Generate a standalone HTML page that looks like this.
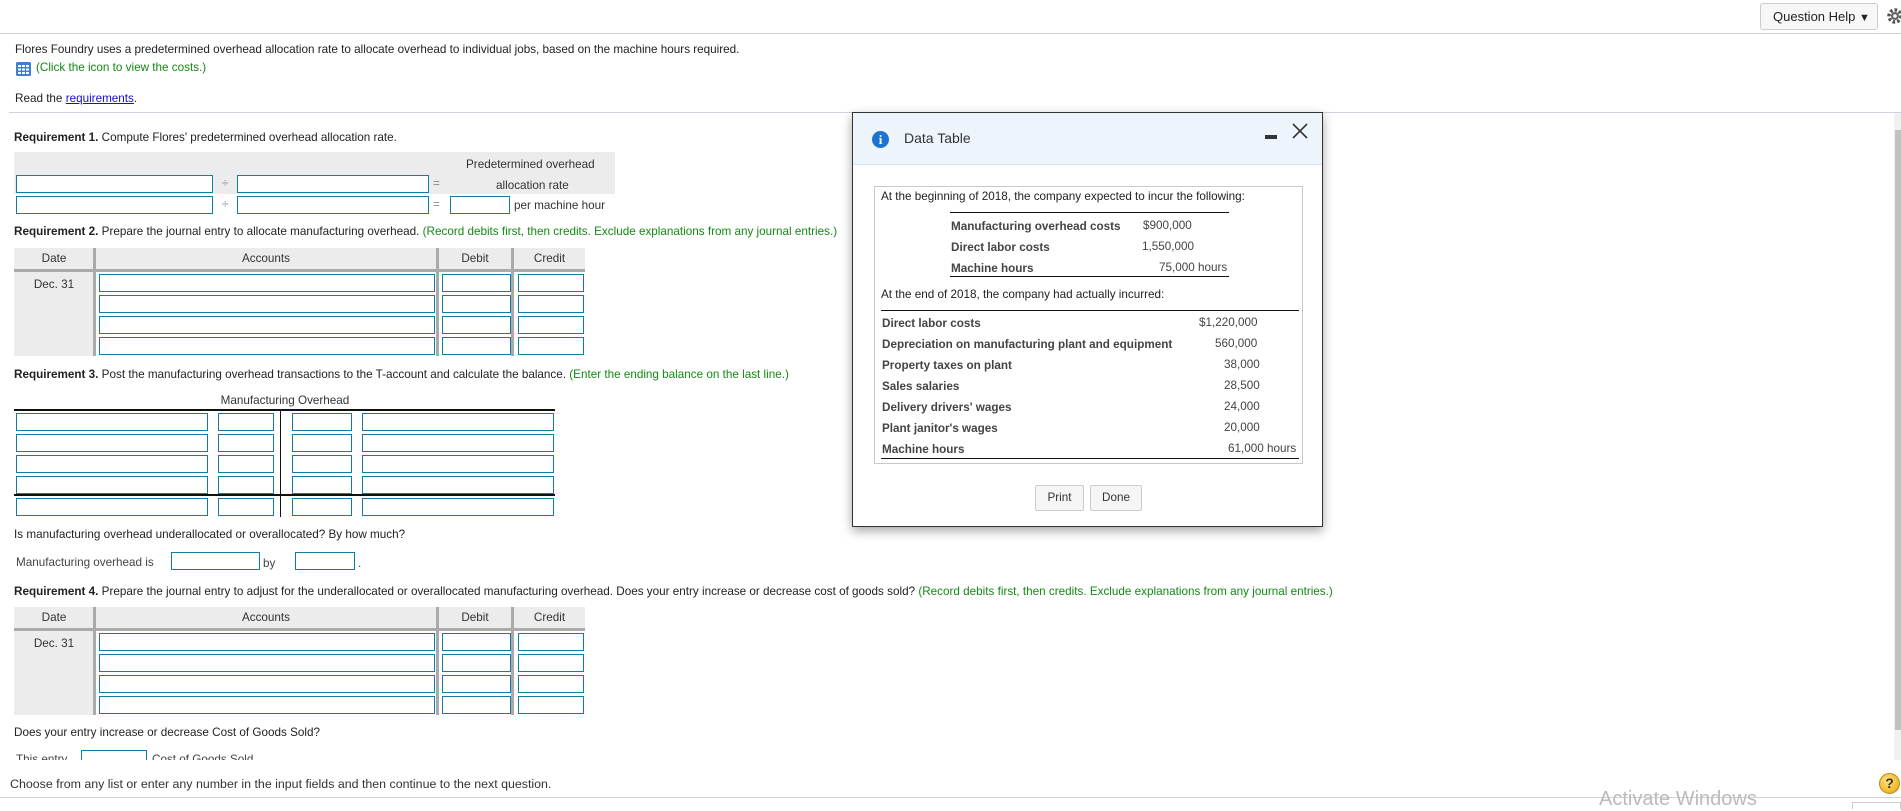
<!DOCTYPE html>
<html><head><meta charset="utf-8">
<style>
*{margin:0;padding:0;box-sizing:border-box}
body{width:1901px;height:809px;overflow:hidden;background:#fff;font-family:"Liberation Sans",Arial,sans-serif;font-size:11.7px;color:#222;position:relative}
.a{position:absolute;white-space:nowrap}
.t{position:absolute;white-space:nowrap;line-height:14px}
.in{position:absolute;border:1px solid #127da0;background:#fff;height:18px}
.g{color:#138a13}
.gray{position:absolute;background:#ececec}
.hl{position:absolute;background:#999}
.dt{position:absolute;white-space:nowrap;line-height:14px;color:#333;font-size:11.7px}
</style></head><body>
<div class="a" style="left:1760px;top:3px;width:118px;height:27px;border:1px solid #ccc;border-radius:3px;background:#f7f7f7;font-size:13px;line-height:25px;padding-left:12px;color:#222">Question Help <span style="font-size:11px">&#9660;</span></div>
<svg class="a" style="left:1886px;top:7px" width="18" height="18" viewBox="0 0 18 18"><circle cx="9" cy="9" r="6" fill="none" stroke="#555" stroke-width="3.5" stroke-dasharray="2.6 2"/><circle cx="9" cy="9" r="4" fill="#666"/><circle cx="9" cy="9" r="1.8" fill="#fff"/></svg>
<div class="a" style="left:0;top:33px;width:1901px;height:1px;background:#cfd3dd"></div>

<div class="t" style="left:15px;top:43px">Flores Foundry uses a predetermined overhead allocation rate to allocate overhead to individual jobs, based on the machine hours required.</div>
<svg class="a" style="left:16px;top:62px" width="15" height="14" viewBox="0 0 15 14"><rect width="15" height="14" rx="1.5" fill="#3d7fd1"/><g fill="#fff"><rect x="2" y="3" width="3" height="2"/><rect x="6" y="3" width="3" height="2"/><rect x="10" y="3" width="3" height="2"/><rect x="2" y="6.5" width="3" height="2"/><rect x="6" y="6.5" width="3" height="2"/><rect x="10" y="6.5" width="3" height="2"/><rect x="2" y="10" width="3" height="2"/><rect x="6" y="10" width="3" height="2"/><rect x="10" y="10" width="3" height="2"/></g></svg>
<div class="t g" style="left:36px;top:61px">(Click the icon to view the costs.)</div>
<div class="t" style="left:15px;top:92px">Read the <span style="color:#1a0dcc;text-decoration:underline">requirements</span>.</div>
<div class="a" style="left:9px;top:112px;width:1892px;height:1px;background:#cfd3dd"></div>

<div class="t" style="left:14px;top:131px"><b>Requirement 1.</b> Compute Flores' predetermined overhead allocation rate.</div>
<div class="gray" style="left:14px;top:152px;width:601px;height:42px"></div>
<div class="t" style="left:466px;top:158px;color:#333">Predetermined overhead</div>
<div class="t" style="left:496px;top:179px;color:#333">allocation rate</div>
<div class="in" style="left:16px;top:175px;width:197px"></div>
<div class="t" style="left:222px;top:177px;color:#888">÷</div>
<div class="in" style="left:237px;top:175px;width:192px"></div>
<div class="t" style="left:433px;top:177px;color:#888">=</div>
<div class="in" style="left:16px;top:196px;width:197px"></div>
<div class="t" style="left:222px;top:198px;color:#888">÷</div>
<div class="in" style="left:237px;top:196px;width:192px"></div>
<div class="t" style="left:433px;top:198px;color:#888">=</div>
<div class="in" style="left:450px;top:196px;width:60px"></div>
<div class="t" style="left:514px;top:199px;color:#333">per machine hour</div>

<div class="t" style="left:14px;top:225px"><b>Requirement 2.</b> Prepare the journal entry to allocate manufacturing overhead. <span class="g">(Record debits first, then credits. Exclude explanations from any journal entries.)</span></div>

<div class="gray" style="left:14px;top:248px;width:571px;height:22px"></div>
<div class="gray" style="left:14px;top:272px;width:80px;height:84px"></div>
<div class="hl" style="left:14px;top:269px;width:571px;height:3px;background:#aaa"></div>
<div class="hl" style="left:93px;top:248px;width:3px;height:108px;background:#aaa"></div>
<div class="hl" style="left:436px;top:248px;width:3px;height:108px;background:#aaa"></div>
<div class="hl" style="left:511px;top:248px;width:3px;height:108px;background:#aaa"></div>
<div class="t" style="left:14px;top:252px;width:80px;text-align:center;color:#333">Date</div>
<div class="t" style="left:96px;top:252px;width:340px;text-align:center;color:#333">Accounts</div>
<div class="t" style="left:439px;top:252px;width:72px;text-align:center;color:#333">Debit</div>
<div class="t" style="left:514px;top:252px;width:71px;text-align:center;color:#333">Credit</div>
<div class="t" style="left:14px;top:278px;width:80px;text-align:center;color:#333">Dec. 31</div>
<div class="in" style="left:99px;top:274px;width:336px"></div><div class="in" style="left:442px;top:274px;width:69px"></div><div class="in" style="left:518px;top:274px;width:66px"></div>
<div class="in" style="left:99px;top:295px;width:336px"></div><div class="in" style="left:442px;top:295px;width:69px"></div><div class="in" style="left:518px;top:295px;width:66px"></div>
<div class="in" style="left:99px;top:316px;width:336px"></div><div class="in" style="left:442px;top:316px;width:69px"></div><div class="in" style="left:518px;top:316px;width:66px"></div>
<div class="in" style="left:99px;top:337px;width:336px"></div><div class="in" style="left:442px;top:337px;width:69px"></div><div class="in" style="left:518px;top:337px;width:66px"></div>

<div class="t" style="left:14px;top:368px"><b>Requirement 3.</b> Post the manufacturing overhead transactions to the T-account and calculate the balance. <span class="g">(Enter the ending balance on the last line.)</span></div>
<div class="t" style="left:14px;top:394px;width:542px;text-align:center;color:#333">Manufacturing Overhead</div>
<div class="a" style="left:14px;top:409px;width:541px;height:2px;background:#111"></div>
<div class="a" style="left:280px;top:410px;width:1px;height:107px;background:#111"></div>
<div class="a" style="left:14px;top:494px;width:541px;height:2px;background:#111"></div>
<div class="in" style="left:16px;top:413px;width:192px"></div><div class="in" style="left:218px;top:413px;width:56px"></div><div class="in" style="left:292px;top:413px;width:60px"></div><div class="in" style="left:362px;top:413px;width:192px"></div>
<div class="in" style="left:16px;top:434px;width:192px"></div><div class="in" style="left:218px;top:434px;width:56px"></div><div class="in" style="left:292px;top:434px;width:60px"></div><div class="in" style="left:362px;top:434px;width:192px"></div>
<div class="in" style="left:16px;top:455px;width:192px"></div><div class="in" style="left:218px;top:455px;width:56px"></div><div class="in" style="left:292px;top:455px;width:60px"></div><div class="in" style="left:362px;top:455px;width:192px"></div>
<div class="in" style="left:16px;top:476px;width:192px"></div><div class="in" style="left:218px;top:476px;width:56px"></div><div class="in" style="left:292px;top:476px;width:60px"></div><div class="in" style="left:362px;top:476px;width:192px"></div>
<div class="in" style="left:16px;top:498px;width:192px"></div><div class="in" style="left:218px;top:498px;width:56px"></div><div class="in" style="left:292px;top:498px;width:60px"></div><div class="in" style="left:362px;top:498px;width:192px"></div>

<div class="t" style="left:14px;top:528px">Is manufacturing overhead underallocated or overallocated? By how much?</div>
<div class="t" style="left:16px;top:556px;color:#444">Manufacturing overhead is</div>
<div class="in" style="left:171px;top:552px;width:89px"></div>
<div class="t" style="left:263px;top:557px;color:#444">by</div>
<div class="in" style="left:295px;top:552px;width:60px"></div>
<div class="t" style="left:358px;top:557px;color:#444">.</div>

<div class="t" style="left:14px;top:585px"><b>Requirement 4.</b> Prepare the journal entry to adjust for the underallocated or overallocated manufacturing overhead. Does your entry increase or decrease cost of goods sold? <span class="g">(Record debits first, then credits. Exclude explanations from any journal entries.)</span></div>
<div class="gray" style="left:14px;top:607px;width:571px;height:22px"></div>
<div class="gray" style="left:14px;top:631px;width:80px;height:84px"></div>
<div class="hl" style="left:14px;top:628px;width:571px;height:3px;background:#aaa"></div>
<div class="hl" style="left:93px;top:607px;width:3px;height:108px;background:#aaa"></div>
<div class="hl" style="left:436px;top:607px;width:3px;height:108px;background:#aaa"></div>
<div class="hl" style="left:511px;top:607px;width:3px;height:108px;background:#aaa"></div>
<div class="t" style="left:14px;top:611px;width:80px;text-align:center;color:#333">Date</div>
<div class="t" style="left:96px;top:611px;width:340px;text-align:center;color:#333">Accounts</div>
<div class="t" style="left:439px;top:611px;width:72px;text-align:center;color:#333">Debit</div>
<div class="t" style="left:514px;top:611px;width:71px;text-align:center;color:#333">Credit</div>
<div class="t" style="left:14px;top:637px;width:80px;text-align:center;color:#333">Dec. 31</div>
<div class="in" style="left:99px;top:633px;width:336px"></div><div class="in" style="left:442px;top:633px;width:69px"></div><div class="in" style="left:518px;top:633px;width:66px"></div>
<div class="in" style="left:99px;top:654px;width:336px"></div><div class="in" style="left:442px;top:654px;width:69px"></div><div class="in" style="left:518px;top:654px;width:66px"></div>
<div class="in" style="left:99px;top:675px;width:336px"></div><div class="in" style="left:442px;top:675px;width:69px"></div><div class="in" style="left:518px;top:675px;width:66px"></div>
<div class="in" style="left:99px;top:696px;width:336px"></div><div class="in" style="left:442px;top:696px;width:69px"></div><div class="in" style="left:518px;top:696px;width:66px"></div>

<div class="t" style="left:14px;top:726px">Does your entry increase or decrease Cost of Goods Sold?</div>
<div class="a" style="left:0;top:750px;width:700px;height:10px;overflow:hidden">
<div class="t" style="left:16px;top:3px;color:#444">This entry</div>
<div class="in" style="left:81px;top:0px;width:66px"></div>
<div class="t" style="left:152px;top:3px;color:#444">Cost of Goods Sold.</div>
</div>

<div class="a" style="left:1894px;top:113px;width:7px;height:647px;background:#f1f1f1"></div>
<div class="a" style="left:1895px;top:130px;width:6px;height:600px;background:#c1c1c1"></div>

<div class="a" style="left:10px;top:776px;font-size:12.4px;color:#333;line-height:16px">Choose from any list or enter any number in the input fields and then continue to the next question.</div>
<div class="a" style="left:0;top:797px;width:1901px;height:1px;background:#cfd3dd"></div>
<div class="a" style="left:1879px;top:773px;width:21px;height:21px;border-radius:50%;background:radial-gradient(circle at 40% 35%,#ffe27a,#f0b62a 70%,#c98f10);border:1px solid #b98a1e;text-align:center;font-weight:bold;font-size:14px;line-height:19px;color:#333">?</div>
<div class="a" style="left:1599px;top:787px;font-size:20px;color:#bbb;line-height:24px">Activate Windows</div>
<div class="a" style="left:1852px;top:802px;width:49px;height:7px;border:1px solid #ccc;border-bottom:none"></div>

<div class="a" style="left:852px;top:112px;width:471px;height:415px;border:1px solid #333;background:#fff;box-shadow:0 4px 10px rgba(0,0,0,0.35)">
  <div class="a" style="left:0;top:0;width:469px;height:52px;background:#eef4fb;border-bottom:1px solid #d6e4f3"></div>
  <div class="a" style="left:19px;top:18px;width:17px;height:17px;border-radius:50%;background:#1d74d0;color:#fff;font-weight:bold;font-family:'Liberation Serif',serif;font-size:13px;text-align:center;line-height:17px">i</div>
  <div class="a" style="left:51px;top:16px;font-size:14px;color:#333;line-height:18px">Data Table</div>
  <div class="a" style="left:412px;top:22px;width:12px;height:4px;background:#333"></div>
  <svg class="a" style="left:439px;top:10px" width="16" height="16" viewBox="0 0 16 16"><path d="M1 1L15 15M15 1L1 15" stroke="#333" stroke-width="1.6"/></svg>
  <div class="a" style="left:21px;top:73px;width:429px;height:278px;border:1px solid #c8c8c8"></div>
  <div class="dt" style="left:28px;top:77px;color:#222">At the beginning of 2018, the company expected to incur the following:</div>
  <div class="a" style="left:97px;top:99px;width:279px;height:1px;background:#111"></div>
  <div class="dt" style="left:98px;top:107px;font-weight:bold;color:#444">Manufacturing overhead costs</div><div class="dt" style="left:290px;top:106px;color:#444">$900,000</div>
  <div class="dt" style="left:98px;top:128px;font-weight:bold;color:#444">Direct labor costs</div><div class="dt" style="left:289px;top:127px;color:#444">1,550,000</div>
  <div class="dt" style="left:98px;top:149px;font-weight:bold;color:#444">Machine hours</div><div class="dt" style="left:306px;top:148px;color:#444">75,000 hours</div>
  <div class="a" style="left:97px;top:163px;width:279px;height:1px;background:#111"></div>
  <div class="dt" style="left:28px;top:175px;color:#222">At the end of 2018, the company had actually incurred:</div>
  <div class="a" style="left:28px;top:197px;width:418px;height:1px;background:#111"></div>
  <div class="dt" style="left:29px;top:204px;font-weight:bold;color:#444">Direct labor costs</div><div class="dt" style="left:346px;top:203px;color:#444">$1,220,000</div>
  <div class="dt" style="left:29px;top:225px;font-weight:bold;color:#444">Depreciation on manufacturing plant and equipment</div><div class="dt" style="left:362px;top:224px;color:#444">560,000</div>
  <div class="dt" style="left:29px;top:246px;font-weight:bold;color:#444">Property taxes on plant</div><div class="dt" style="left:371px;top:245px;color:#444">38,000</div>
  <div class="dt" style="left:29px;top:267px;font-weight:bold;color:#444">Sales salaries</div><div class="dt" style="left:371px;top:266px;color:#444">28,500</div>
  <div class="dt" style="left:29px;top:288px;font-weight:bold;color:#444">Delivery drivers' wages</div><div class="dt" style="left:371px;top:287px;color:#444">24,000</div>
  <div class="dt" style="left:29px;top:309px;font-weight:bold;color:#444">Plant janitor's wages</div><div class="dt" style="left:371px;top:308px;color:#444">20,000</div>
  <div class="dt" style="left:29px;top:330px;font-weight:bold;color:#444">Machine hours</div><div class="dt" style="left:375px;top:329px;color:#444">61,000 hours</div>
  <div class="a" style="left:28px;top:345px;width:418px;height:1px;background:#111"></div>
  <div class="a" style="left:182px;top:372px;width:49px;height:26px;border:1px solid #ccc;border-radius:2px;background:#f5f5f5;text-align:center;line-height:24px;color:#333">Print</div>
  <div class="a" style="left:237px;top:372px;width:52px;height:26px;border:1px solid #ccc;border-radius:2px;background:#f5f5f5;text-align:center;line-height:24px;color:#333">Done</div>
</div>
</body></html>
